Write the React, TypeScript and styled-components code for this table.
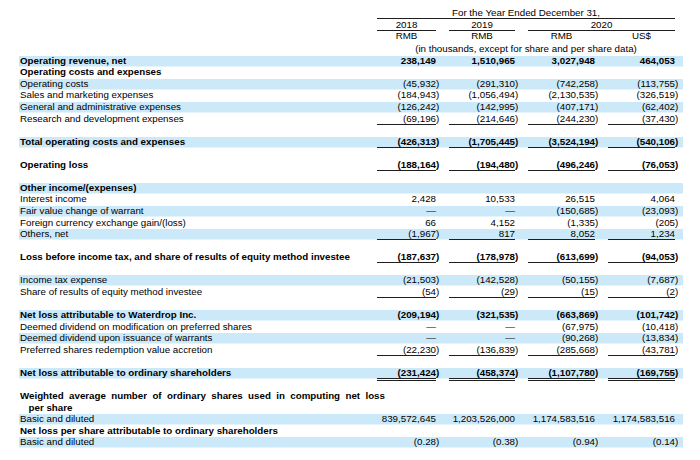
import React from 'react';
import styled, { createGlobalStyle } from 'styled-components';

const GlobalStyle = createGlobalStyle`
  html, body { margin: 0; padding: 0; background: #ffffff; }
  body {
    font-family: "Liberation Sans", Arial, sans-serif;
    font-size: 9.75px;
    color: #000000;
  }
`;

const BAND = '#cce9f9';
const RULE = '#1e1e1e';

const Sheet = styled.div`
  width: 664px;
  padding: 8.3px 0 0 19px;
`;

const Grid = styled.div`
  display: grid;
  grid-template-columns: 345px 59px 66px 67px 67px;
  column-gap: 13px;
  padding-right: 8px;
`;

const HeadRow = styled(Grid)<{ $gap?: number }>`
  margin-top: ${(p) => p.$gap ?? 0}px;
  line-height: 10px;
`;

const HeadCell = styled.div<{ $span?: string; $rule?: boolean }>`
  grid-column: ${(p) => p.$span ?? 'auto'};
  text-align: center;
  white-space: nowrap;
  border-bottom: ${(p) => (p.$rule ? `1px solid ${RULE}` : 'none')};
`;

const Body = styled.div`
  margin-top: 2.1px;
`;

const Row = styled(Grid)<{ $band?: boolean }>`
  height: 11.575px;
  align-items: start;
  background: ${(p) =>
    p.$band ? `linear-gradient(${BAND}, ${BAND}) 0 0 / 100% 10.5px no-repeat` : 'none'};
`;

const Label = styled.div<{ $bold?: boolean; $indent?: boolean; $spread?: boolean }>`
  padding-left: ${(p) => (p.$indent ? 9.5 : 1)}px;
  line-height: 10px;
  white-space: nowrap;
  font-weight: ${(p) => (p.$bold ? 700 : 400)};
  word-spacing: ${(p) => (p.$spread ? '2.65px' : 'normal')};
`;

type RuleKind = 'none' | 'single' | 'double';

const Num = styled.div<{ $bold?: boolean; $rule: RuleKind }>`
  box-sizing: border-box;
  height: ${(p) => (p.$rule === 'double' ? 13.5 : 11)}px;
  line-height: 10px;
  text-align: right;
  white-space: nowrap;
  font-weight: ${(p) => (p.$bold ? 700 : 400)};
  border-bottom: ${(p) =>
    p.$rule === 'single'
      ? `1px solid ${RULE}`
      : p.$rule === 'double'
      ? `3px double ${RULE}`
      : '1px solid transparent'};
`;

const Close = styled.span`
  display: inline-block;
  margin-right: -3.25px;
`;

type Line = {
  label?: string;
  bold?: boolean;
  indent?: boolean;
  spread?: boolean;
  band?: boolean;
  values?: string[];
  rule?: RuleKind;
};

const lines: Line[] = [
  { label: 'Operating revenue, net', bold: true, band: true, values: ['238,149', '1,510,965', '3,027,948', '464,053'] },
  { label: 'Operating costs and expenses', bold: true },
  { label: 'Operating costs', band: true, values: ['(45,932)', '(291,310)', '(742,258)', '(113,755)'] },
  { label: 'Sales and marketing expenses', values: ['(184,943)', '(1,056,494)', '(2,130,535)', '(326,519)'] },
  { label: 'General and administrative expenses', band: true, values: ['(126,242)', '(142,995)', '(407,171)', '(62,402)'] },
  { label: 'Research and development expenses', values: ['(69,196)', '(214,646)', '(244,230)', '(37,430)'], rule: 'single' },
  {},
  { label: 'Total operating costs and expenses', bold: true, band: true, values: ['(426,313)', '(1,705,445)', '(3,524,194)', '(540,106)'], rule: 'single' },
  {},
  { label: 'Operating loss', bold: true, values: ['(188,164)', '(194,480)', '(496,246)', '(76,053)'], rule: 'single' },
  {},
  { label: 'Other income/(expenses)', bold: true, band: true },
  { label: 'Interest income', values: ['2,428', '10,533', '26,515', '4,064'] },
  { label: 'Fair value change of warrant', band: true, values: ['—', '—', '(150,685)', '(23,093)'] },
  { label: 'Foreign currency exchange gain/(loss)', values: ['66', '4,152', '(1,335)', '(205)'] },
  { label: 'Others, net', band: true, values: ['(1,967)', '817', '8,052', '1,234'], rule: 'single' },
  {},
  { label: 'Loss before income tax, and share of results of equity method investee', bold: true, values: ['(187,637)', '(178,978)', '(613,699)', '(94,053)'], rule: 'single' },
  {},
  { label: 'Income tax expense', band: true, values: ['(21,503)', '(142,528)', '(50,155)', '(7,687)'] },
  { label: 'Share of results of equity method investee', values: ['(54)', '(29)', '(15)', '(2)'], rule: 'single' },
  {},
  { label: 'Net loss attributable to Waterdrop Inc.', bold: true, band: true, values: ['(209,194)', '(321,535)', '(663,869)', '(101,742)'] },
  { label: 'Deemed dividend on modification on preferred shares', values: ['—', '—', '(67,975)', '(10,418)'] },
  { label: 'Deemed dividend upon issuance of warrants', band: true, values: ['—', '—', '(90,268)', '(13,834)'] },
  { label: 'Preferred shares redemption value accretion', values: ['(22,230)', '(136,839)', '(285,668)', '(43,781)'], rule: 'single' },
  {},
  { label: 'Net loss attributable to ordinary shareholders', bold: true, band: true, values: ['(231,424)', '(458,374)', '(1,107,780)', '(169,755)'], rule: 'double' },
  {},
  { label: 'Weighted average number of ordinary shares used in computing net loss', bold: true, spread: true },
  { label: 'per share', bold: true, indent: true },
  { label: 'Basic and diluted', band: true, values: ['839,572,645', '1,203,526,000', '1,174,583,516', '1,174,583,516'] },
  { label: 'Net loss per share attributable to ordinary shareholders', bold: true },
  { label: 'Basic and diluted', band: true, values: ['(0.28)', '(0.38)', '(0.94)', '(0.14)'] },
];

function Value({ text }: { text: string }) {
  if (text.startsWith('(') && text.endsWith(')')) {
    return (
      <>
        {text.slice(0, -1)}
        <Close>)</Close>
      </>
    );
  }
  return <>{text}</>;
}

export default function App() {
  return (
    <>
      <GlobalStyle />
      <Sheet>
        <HeadRow>
          <HeadCell />
          <HeadCell $span="2 / 6" $rule>
            For the Year Ended December 31,
          </HeadCell>
        </HeadRow>
        <HeadRow $gap={0.8}>
          <HeadCell />
          <HeadCell $rule>2018</HeadCell>
          <HeadCell $rule>2019</HeadCell>
          <HeadCell $span="4 / 6" $rule>
            2020
          </HeadCell>
        </HeadRow>
        <HeadRow>
          <HeadCell />
          <HeadCell>RMB</HeadCell>
          <HeadCell>RMB</HeadCell>
          <HeadCell>RMB</HeadCell>
          <HeadCell>US$</HeadCell>
        </HeadRow>
        <HeadRow $gap={2.5}>
          <HeadCell />
          <HeadCell $span="2 / 6">(in thousands, except for share and per share data)</HeadCell>
        </HeadRow>
        <Body>
          {lines.map((l, i) => (
            <Row key={i} $band={l.band}>
              <Label $bold={l.bold} $indent={l.indent} $spread={l.spread}>
                {l.label ?? ''}
              </Label>
              {(l.values ?? ['', '', '', '']).map((v, j) =>
                l.values ? (
                  <Num key={j} $bold={l.bold} $rule={l.rule ?? 'none'}>
                    <Value text={v} />
                  </Num>
                ) : (
                  <div key={j} />
                )
              )}
            </Row>
          ))}
        </Body>
      </Sheet>
    </>
  );
}
